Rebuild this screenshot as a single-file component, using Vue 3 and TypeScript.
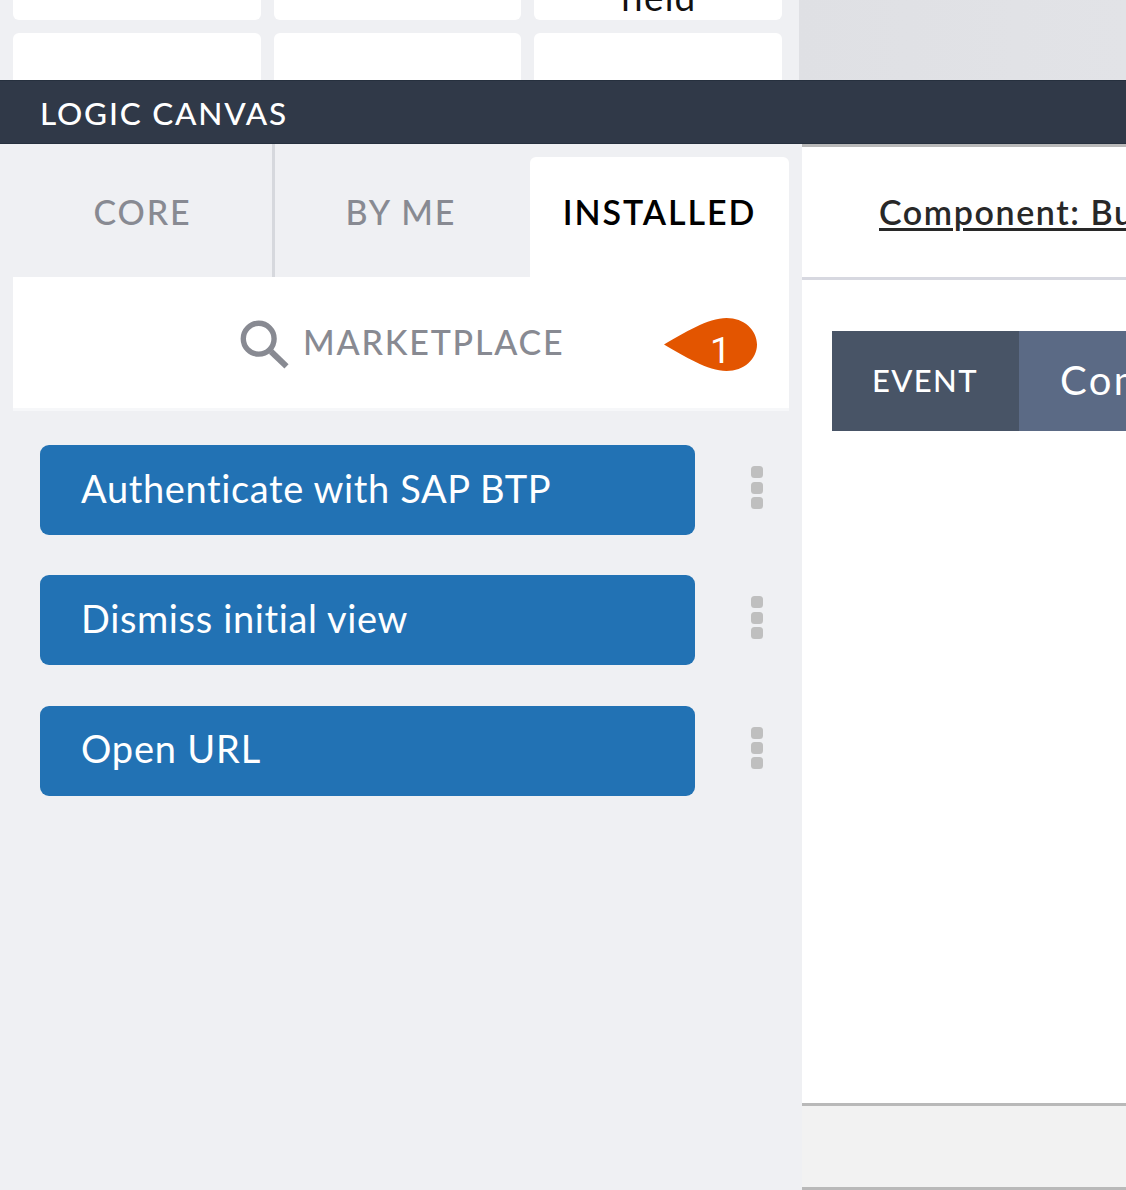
<script setup lang="ts">
interface Tab {
  id: string
  label: string
  active: boolean
}

interface LogicItem {
  id: string
  label: string
}

const tabs: Tab[] = [
  { id: 'core', label: 'CORE', active: false },
  { id: 'mine', label: 'BY ME', active: false },
  { id: 'installed', label: 'INSTALLED', active: true },
]

const items: LogicItem[] = [
  { id: 'auth', label: 'Authenticate with SAP BTP' },
  { id: 'dismiss', label: 'Dismiss initial view' },
  { id: 'open', label: 'Open URL' },
]

const tiles: string[] = ['', '', 'field', '', '', '']
</script>

<template>
  <div class="screen">
    <div class="top">
      <div class="palette">
        <div v-for="(tile, i) in tiles" :key="i" class="tile"><span>{{ tile }}</span></div>
      </div>
      <div class="stage"></div>
    </div>

    <header class="bar"><span>LOGIC CANVAS</span></header>

    <div class="main">
      <aside class="side">
        <nav class="tabs">
          <div v-for="tab in tabs" :key="tab.id" class="tab" :class="[tab.id, { active: tab.active }]">
            <span>{{ tab.label }}</span>
          </div>
        </nav>
        <div class="market">
          <svg class="search" width="50" height="50" viewBox="0 0 50 50" fill="none">
            <circle cx="18.7" cy="18.7" r="15.4" stroke="#888a92" stroke-width="5.4" />
            <path d="M31 31.5L46.5 46.3" stroke="#888a92" stroke-width="6" />
          </svg>
          <span class="t-market">MARKETPLACE</span>
          <div class="marker">
            <svg width="94" height="54" viewBox="0 0 94 54">
              <path d="M0 26.500C20 15 44 0 62.500 0C80 0 93 12 93 26.500S80 53 62.500 53C44 53 20 38 0 26.500Z" fill="#e35500" />
            </svg>
            <span>1</span>
          </div>
        </div>
        <ul class="list">
          <li v-for="item in items" :key="item.id" class="row">
            <div class="item"><span :class="item.id">{{ item.label }}</span></div>
            <div class="dots"><i></i><i></i><i></i></div>
          </li>
        </ul>
      </aside>

      <section class="canvas">
        <div class="crumb"><span>Component: Button</span></div>
        <div class="work">
          <div class="node">
            <div class="kind"><span>EVENT</span></div>
            <div class="name"><span>Component tap</span></div>
          </div>
        </div>
        <footer class="foot"></footer>
      </section>
    </div>
  </div>
</template>

<style>
body {
  overflow: hidden;
}
</style>

<style scoped>
.screen {
  width: 1126px;
  height: 1190px;
  overflow: hidden;
  display: flex;
  flex-direction: column;
  background: #eff0f3;
  font-family: Lato, "Liberation Sans", sans-serif;
  white-space: nowrap;
}
.top {
  height: 80px;
  display: flex;
  overflow: hidden;
}
.palette {
  width: 799px;
  box-sizing: border-box;
  padding: 0 17px 0 13px;
  display: grid;
  grid-template-columns: repeat(3, 247.5px);
  grid-template-rows: 20px 60px;
  column-gap: 13.2px;
  row-gap: 13px;
  flex: none;
}
.tile {
  background: #fff;
  border-radius: 0 0 6px 6px;
  display: flex;
  justify-content: center;
  align-items: flex-end;
  overflow: hidden;
  color: #111;
  font-size: 37px;
  line-height: 46px;
  letter-spacing: 1.1px;
}
.tile:nth-child(n + 4) {
  border-radius: 6px;
}
.stage {
  flex: 1;
  background: linear-gradient(90deg, #dfe0e4, #e2e3e7);
}
.bar {
  height: 64px;
  flex: none;
  box-sizing: border-box;
  background: #303948;
  border-top: 1px solid #26303e;
  border-bottom: 1px solid #26303e;
  padding: 2px 0 0 40px;
  display: flex;
  align-items: center;
  color: #fff;
  font-size: 31.5px;
  font-weight: 500;
  letter-spacing: 1.8px;
}
.main {
  flex: 1;
  display: flex;
}
.side {
  width: 802px;
  flex: none;
  box-sizing: border-box;
  padding: 0 13px;
}
.tabs {
  height: 133px;
  display: flex;
  align-items: flex-end;
  color: #888a92;
  font-size: 34px;
  font-weight: 500;
  letter-spacing: 1.9px;
}
.tab {
  height: 133px;
  width: 259px;
  box-sizing: border-box;
  display: flex;
  align-items: center;
  justify-content: center;
  padding-top: 1px;
}
.tab.core {
  width: 262px;
  border-right: 3px solid #d6d8dd;
}
.tab.mine {
  width: 255px;
  padding-right: 3px;
}
.tab.active {
  height: 120px;
  padding-top: 0;
  padding-bottom: 12px;
  background: #fff;
  border-radius: 6px 6px 0 0;
  color: #000;
  letter-spacing: 1.9px;
  font-weight: 600;
}
.market {
  position: relative;
  height: 134px;
  box-sizing: border-box;
  background: #fff;
  border-bottom: 3px solid #f6f7f9;
  display: flex;
  align-items: center;
  padding-left: 227px;
  width: 776px;
}
.search {
  margin-top: 5px;
}
.t-market {
  margin: -3px 0 0 13px;
  font-size: 34px;
  font-weight: 500;
  letter-spacing: 1.8px;
  color: #888a92;
}
.marker {
  position: absolute;
  left: 651px;
  top: 41px;
  width: 94px;
  height: 54px;
}
.marker svg {
  display: block;
}
.marker span {
  position: absolute;
  left: 46px;
  top: 11px;
  font: 400 37px/43px Roboto, "Liberation Sans", sans-serif;
  color: #fff;
}
.list {
  list-style: none;
  margin: 0;
  padding: 34px 0 0 27px;
  display: flex;
  flex-direction: column;
  gap: 40.3px;
}
.row {
  display: flex;
  align-items: center;
}
.item {
  width: 655px;
  height: 90px;
  box-sizing: border-box;
  border-radius: 9px;
  background: #2272b4;
  color: #fff;
  padding: 0 0 5px 41px;
  display: flex;
  align-items: center;
  font-size: 38px;
  letter-spacing: 0.63px;
}
.item .open {
  letter-spacing: 0.8px;
}
.dots {
  margin-left: 56px;
  margin-top: -5px;
  display: flex;
  flex-direction: column;
  gap: 3.4px;
}
.dots i {
  width: 12px;
  height: 12px;
  border-radius: 3.5px;
  background: #bfbfbf;
}
.canvas {
  flex: 1;
  min-width: 0;
  display: flex;
  flex-direction: column;
  background: #fff;
  border-top: 3px solid #b9b9b9;
}
.crumb {
  height: 133px;
  box-sizing: border-box;
  border-bottom: 3px solid #d7d8e0;
  padding: 0 0 1px 77px;
  display: flex;
  align-items: center;
  color: #282828;
  font-size: 34px;
  font-weight: 600;
  letter-spacing: 1.6px;
  text-decoration: underline;
  text-decoration-thickness: 3px;
  text-underline-offset: 3px;
}
.work {
  flex: 1;
  padding: 51px 0 0 30px;
}
.node {
  height: 100px;
  display: flex;
  color: #fff;
}
.kind {
  width: 187px;
  flex: none;
  box-sizing: border-box;
  padding: 0 0 3px 40px;
  background: #485466;
  display: flex;
  align-items: center;
  font-size: 31px;
  font-weight: 500;
  letter-spacing: 1.4px;
}
.name {
  flex: 1;
  padding: 0 0 2px 41px;
  background: #5b6a85;
  display: flex;
  align-items: center;
  font-size: 40px;
  letter-spacing: 2.4px;
  overflow: hidden;
}
.foot {
  height: 87px;
  box-sizing: border-box;
  background: #f2f2f2;
  border-top: 3px solid #b9b9b9;
  border-bottom: 3px solid #b9b9b9;
}
</style>
